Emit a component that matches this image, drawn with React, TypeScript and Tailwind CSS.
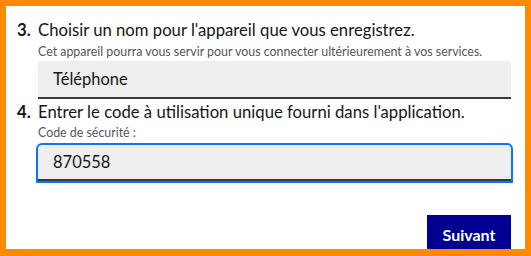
import React from "react";

export default function App() {
  return (
    <div
      className="w-[531px] h-[256px] border-[#ff8a00] border-t-[6px] border-l-[6px] border-r-[6px] border-b-[7px] bg-white overflow-hidden text-[#161616]"
      style={{ fontFamily: "Lato, 'Liberation Sans', sans-serif" }}
    >
      <div className="pl-[11px] pr-[14px] pt-[13px]">
        <div className="flex items-center h-[24px] text-[16.7px]">
          <span className="w-[21px] font-bold">3.</span>
          <span>Choisir un nom pour l'appareil que vous enregistrez.</span>
        </div>
        <div className="pl-[21px]">
          <div className="h-[18px] flex items-center text-[12.4px] text-[#555]">
            Cet appareil pourra vous servir pour vous connecter ultérieurement à vos services.
          </div>
          <div className="mt-[0px] h-[38px] bg-[#eeeeee] rounded-t-[4px] border-b-2 border-[#3a3a3a] flex items-center pl-[15px] text-[16.5px]">
            Téléphone
          </div>
        </div>
        <div className="flex items-center h-[24px] mt-[2px] text-[16.7px]">
          <span className="w-[21px] font-bold">4.</span>
          <span>Entrer le code à utilisation unique fourni dans l'application.</span>
        </div>
        <div className="pl-[21px]">
          <div className="h-[17px] flex items-center text-[12.4px] text-[#555]">Code de sécurité :</div>
          <div className="mt-[3px] h-[36px] bg-[#eeeeee] rounded-t-[4px] border-b-2 border-[#3a3a3a] flex items-center pl-[15px] text-[16.5px] outline-2 outline-[#0a76f6] outline-offset-[0px]">
            870558
          </div>
        </div>
        <div className="flex justify-end mt-[34px]">
          <button className="w-[84px] h-[40px] bg-[#000091] text-white font-bold text-[16px]">
            Suivant
          </button>
        </div>
      </div>
    </div>
  );
}
